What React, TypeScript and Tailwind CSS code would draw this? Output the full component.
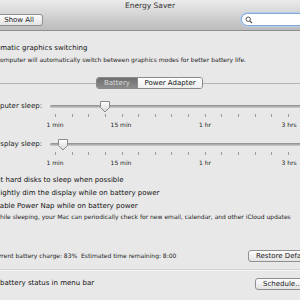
import React from 'react';

const font = { fontFamily: '"DejaVu Sans", "Liberation Sans", sans-serif' };

const ticks = Array.from({ length: 15 }, (_, i) => i);

function Thumb() {
  return (
    <svg width="12" height="13" viewBox="0 0 12 13">
      <defs>
        <linearGradient id="thumbFill" x1="0" y1="0" x2="0" y2="1">
          <stop offset="0" stopColor="#ffffff" />
          <stop offset="1" stopColor="#d6d6d6" />
        </linearGradient>
      </defs>
      <path d="M1.5 1.5 H10.5 V7.5 L6 12 L1.5 7.5 Z" fill="url(#thumbFill)" stroke="#8a8a8a" strokeWidth="1" />
    </svg>
  );
}

function SleepSlider({ label, thumbCenter }: { label: string; thumbCenter: number }) {
  return (
    <div>
      <div className="flex items-center h-[12px]">
        <div className="w-[42px] shrink-0 flex justify-end">
          <span className="shrink-0 text-[7px] text-[#1a1a1a] whitespace-nowrap">{label}</span>
        </div>
        <div className="relative ml-[8px] flex-1 h-[12px]">
          <div className="absolute left-0 right-[-20px] top-[5px] h-[3px] rounded-full bg-gradient-to-b from-[#8c8c8c] to-[#cfcfcf]" />
          <div className="absolute top-0" style={{ left: thumbCenter - 56 }}>
            <Thumb />
          </div>
        </div>
      </div>
      <div className="relative h-[18px] ml-[55px]">
        {ticks.map((i) => (
          <div
            key={i}
            className="absolute top-[2px] w-px h-[3px] bg-[#9a9a9a]"
            style={{ left: Math.round(i * 16.64) }}
          />
        ))}
        <span className="absolute top-[8px] -translate-x-1/2 text-[6px] text-[#222] whitespace-nowrap" style={{ left: 0 }}>1 min</span>
        <span className="absolute top-[8px] -translate-x-1/2 text-[6px] text-[#222] whitespace-nowrap" style={{ left: 66 }}>15 min</span>
        <span className="absolute top-[8px] -translate-x-1/2 text-[6px] text-[#222] whitespace-nowrap" style={{ left: 150 }}>1 hr</span>
        <span className="absolute top-[8px] -translate-x-1/2 text-[6px] text-[#222] whitespace-nowrap" style={{ left: 234 }}>3 hrs</span>
      </div>
    </div>
  );
}

export default function App() {
  return (
    <div className="w-[300px] h-[300px] overflow-hidden bg-[#e8e8e8] flex flex-col" style={font}>
      {/* toolbar */}
      <div className="h-[31px] shrink-0 bg-gradient-to-b from-[#ebebeb] to-[#bcbcbc] border-b border-[#8e8e8e] flex flex-col">
        <div className="h-[12px] text-center text-[7.5px] leading-[12px] text-[#333]">Energy Saver</div>
        <div className="flex items-center h-[13px] mt-[1px]">
          <button className="ml-[-6px] w-[49px] h-[12px] rounded-[3px] border border-[#8f8f8f] bg-gradient-to-b from-[#fdfdfd] to-[#e3e3e3] text-[7px] leading-[10px] text-[#1a1a1a] text-right pr-[8px]">
            Show All
          </button>
          <div className="ml-auto mr-[-30px] w-[89px] h-[13px] rounded-full border border-[#86a8d4] bg-white ring-1 ring-[#b4cdeb] flex items-center pl-[3px]">
            <svg width="8" height="8" viewBox="0 0 8 8">
              <circle cx="3.2" cy="3.2" r="2.2" fill="none" stroke="#555" strokeWidth="1" />
              <path d="M4.8 4.8 L7 7" stroke="#555" strokeWidth="1.2" />
            </svg>
          </div>
        </div>
      </div>

      {/* graphics switching */}
      <div className="mt-[12px] h-[10px] text-[7px] leading-[10px] text-[#111] whitespace-nowrap ml-[-16px]">
        Automatic graphics switching
      </div>
      <div className="mt-[3px] h-[8px] text-[6px] leading-[8px] text-[#222] whitespace-nowrap ml-[-18px]">
        Your computer will automatically switch between graphics modes for better battery life.
      </div>

      {/* tabs */}
      <div className="mt-[13px] flex items-center h-[12px]">
        <div className="w-[96px] h-px bg-[#b4b4b4]" />
        <div className="flex h-[12px] rounded-[3px] border border-[#8a8a8a] overflow-hidden text-[7px] leading-[10px]">
          <div className="w-[40px] text-center bg-gradient-to-b from-[#6e6e6e] to-[#8c8c8c] text-[#dcdcdc]">Battery</div>
          <div className="w-[65px] text-center bg-gradient-to-b from-[#ffffff] to-[#efefef] text-[#111] border-l border-[#8a8a8a]">Power Adapter</div>
        </div>
        <div className="flex-1 h-px bg-[#b4b4b4]" />
      </div>

      {/* sliders */}
      <div className="mt-[11px]">
        <SleepSlider label="Computer sleep:" thumbCenter={105} />
      </div>
      <div className="mt-[8px]">
        <SleepSlider label="Display sleep:" thumbCenter={63} />
      </div>

      {/* checkboxes */}
      <div className="mt-[6px] flex flex-col text-[7px] leading-[13px] text-[#111] whitespace-nowrap">
        <div className="ml-[-8px]">Put hard disks to sleep when possible</div>
        <div className="ml-[-6px]">Slightly dim the display while on battery power</div>
        <div className="ml-[-9px]">Enable Power Nap while on battery power</div>
      </div>
      <div className="h-[8px] text-[6px] leading-[8px] text-[#222] whitespace-nowrap ml-[-6px]">
        While sleeping, your Mac can periodically check for new email, calendar, and other iCloud updates
      </div>

      {/* battery charge */}
      <div className="mt-[28px] flex items-center h-[13px]">
        <div className="text-[6px] text-[#222] whitespace-nowrap ml-[-9px]">
          Current battery charge: 83%&nbsp;&nbsp;Estimated time remaining: 8:00
        </div>
        <button className="ml-auto mr-[-22px] w-[74px] h-[12px] rounded-[3px] border border-[#8f8f8f] bg-gradient-to-b from-[#fdfdfd] to-[#e3e3e3] text-[7px] leading-[10px] text-[#1a1a1a] text-left pl-[7px] whitespace-nowrap">
          Restore Defaults
        </button>
      </div>
      <div className="mt-[7px] h-[2px] bg-[#d2d2d2] border-b border-[#f4f4f4]" />

      <div className="mt-[6px] flex items-center h-[13px]">
        <div className="text-[7px] text-[#111] whitespace-nowrap ml-[-21px]">Show battery status in menu bar</div>
        <button className="ml-auto mr-[-6px] w-[51px] h-[12px] rounded-[3px] border border-[#8f8f8f] bg-gradient-to-b from-[#fdfdfd] to-[#e3e3e3] text-[7px] leading-[10px] text-[#1a1a1a] text-left pl-[7px] whitespace-nowrap">
          Schedule...
        </button>
      </div>
    </div>
  );
}
